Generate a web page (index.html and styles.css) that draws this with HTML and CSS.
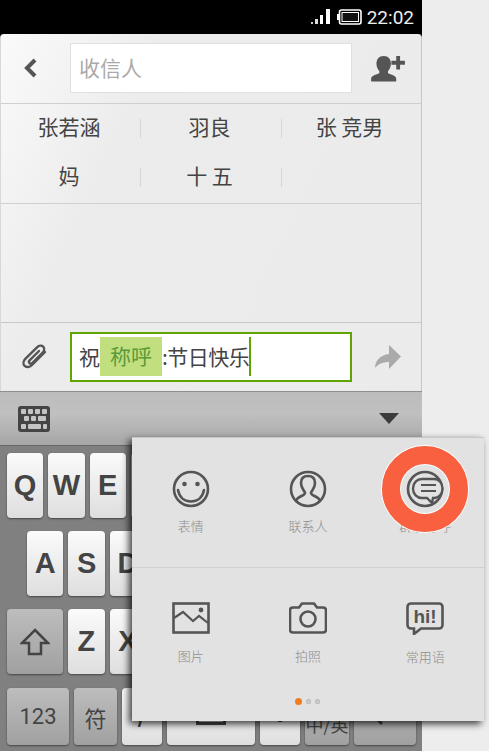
FILE: index.html
```html
<!DOCTYPE html>
<html>
<head>
    <meta charset="UTF-8">
    <title>新建短信</title>
    <link rel="stylesheet" href="styles.css">
</head>
<body>
<div class="phone">
    <!-- barra de status -->
    <div class="status-bar">
        <svg class="signal" width="20" height="16" viewBox="0 0 20 16">
            <rect x="0" y="13" width="2" height="2" fill="#ccc"/>
            <rect x="4" y="10" width="3" height="5" fill="#ddd"/>
            <rect x="9" y="6" width="3" height="9" fill="#fff"/>
            <rect x="15" y="0" width="4" height="15" fill="#fff"/>
        </svg>
        <svg class="battery" width="25" height="16" viewBox="0 0 25 16">
            <rect x="2.5" y="1" width="21.5" height="14" rx="2" fill="none" stroke="#fff" stroke-width="1.6"/>
            <rect x="0" y="5" width="2" height="6" fill="#fff"/>
            <rect x="5" y="3.5" width="16.5" height="9" fill="#111" stroke="#fff" stroke-width="1"/>
        </svg>
        <span class="clock">22:02</span>
    </div>

    <div class="screen">
        <!-- destinatario -->
        <div class="bar to-bar">
            <div class="side-icon back">
                <svg width="14" height="20" viewBox="0 0 14 20"><polyline points="11,2 3,10 11,18" fill="none" stroke="#555" stroke-width="4"/></svg>
            </div>
            <div class="field to-field">收信人</div>
            <div class="side-icon right">
                <svg width="35" height="27" viewBox="0 0 36 28">
                    <path d="M13 1c5 0 7.500 3.500 7.500 8 0 3.500-1.500 6-3 7.500v2.500c3 1.500 8.500 2.500 8.500 5.500v3H0v-3c0-3 5.500-4 8.500-5.500v-2.500C7 15 5.500 12.500 5.500 9c0-4.500 2.500-8 7.500-8z" fill="#555"/>
                    <path d="M26 1h4v5h5v4h-5v5h-4v-5h-5V6h5z" fill="#555"/>
                </svg>
            </div>
        </div>

        <!-- contatos recentes -->
        <div class="recent">
            <div class="recent-cell"><span>张若涵</span></div>
            <div class="recent-cell"><span>羽良</span></div>
            <div class="recent-cell"><span>张 竞男</span></div>
            <div class="recent-cell"><span>妈</span></div>
            <div class="recent-cell"><span>十 五</span></div>
            <div class="recent-cell"><span></span></div>
        </div>

        <div class="empty"></div>

        <!-- mensagem -->
        <div class="bar compose-bar">
            <div class="side-icon">
                <svg width="28" height="26" viewBox="0 0 28 26">
                    <path d="M23 8 10 21c-2.500 2.500-6 2.500-7.500.8s-1.300-4.800.8-7L15 3.300c2-2 4.800-2 6.200-.6s1.400 4-.5 5.900L10.500 18.800c-1 1-2.300 1-3 .3s-.7-2 .3-3L17 7" fill="none" stroke="#555" stroke-width="2.400" stroke-linecap="round"/>
                </svg>
            </div>
            <div class="field compose-field">
                <span>祝</span><span class="token">称呼</span><span class="msg">:节日快乐</span><span class="caret"></span>
            </div>
            <div class="side-icon right">
                <svg width="28" height="26" viewBox="0 0 28 26"><path d="M15 1l12 11.500L15 25v-7C9 18 4 20 1 24c0-7 5-13 14-14z" fill="#aaa"/></svg>
            </div>
        </div>
    </div>

    <!-- barra do teclado -->
    <div class="kb-toolbar">
        <svg width="32" height="26" viewBox="0 0 32 26">
            <rect width="32" height="26" rx="3" fill="#444"/>
            <g fill="#c4c4c4">
                <rect x="3" y="3" width="5" height="5" rx="1"/><rect x="10" y="3" width="5" height="5" rx="1"/><rect x="17" y="3" width="5" height="5" rx="1"/><rect x="24" y="3" width="5" height="5" rx="1"/>
                <rect x="6" y="10" width="5" height="5" rx="1"/><rect x="13" y="10" width="5" height="5" rx="1"/><rect x="20" y="10" width="8" height="5" rx="1"/>
                <rect x="3" y="18" width="5" height="5" rx="1"/><rect x="10" y="18" width="13" height="5" rx="1"/><rect x="25" y="18" width="4" height="5" rx="1"/>
            </g>
        </svg>
        <div class="triangle"></div>
    </div>

    <!-- teclado: as teclas cobertas pelo painel ficam sem letra -->
    <div class="keyboard">
        <div class="key-row">
            <div class="key">Q</div><div class="key">W</div><div class="key">E</div><div class="key"></div><div class="key"></div><div class="key"></div><div class="key"></div><div class="key"></div><div class="key"></div><div class="key"></div>
        </div>
        <div class="key-row row-inset">
            <div class="key">A</div><div class="key">S</div><div class="key">D</div><div class="key"></div><div class="key"></div><div class="key"></div><div class="key"></div><div class="key"></div><div class="key"></div>
        </div>
        <div class="key-row">
            <div class="key key-dark key-shift">
                <svg width="30" height="28" viewBox="0 0 30 28"><path d="M15 2 28 15h-7v11H9V15H2z" fill="none" stroke="#444" stroke-width="2.500"/></svg>
            </div>
            <div class="key">Z</div><div class="key">X</div><div class="key"></div><div class="key"></div><div class="key"></div><div class="key"></div><div class="key"></div>
            <div class="key key-dark key-shift"></div>
        </div>
        <div class="key-row row-bottom">
            <div class="key key-dark key-small w-62">123</div>
            <div class="key key-dark key-small w-43">符</div>
            <div class="key key-slash w-40">/</div>
            <div class="key w-88"><div class="space-mark"></div></div>
            <div class="key key-dot w-40">.</div>
            <div class="key key-dark key-lang w-44">中/英</div>
            <div class="key key-dark w-62">
                <svg width="30" height="26" viewBox="0 0 30 26"><path d="M26 3v10H6M12 6l-7 7 7 7" fill="none" stroke="#444" stroke-width="3"/></svg>
            </div>
        </div>
    </div>
</div>

<!-- painel de anexos -->
<div class="panel">
    <div class="panel-row first">
        <div class="panel-item">
            <svg width="38" height="38" viewBox="0 0 38 38">
                <circle cx="19" cy="19" r="17" fill="none" stroke="#555" stroke-width="2.600"/>
                <circle cx="12.500" cy="14" r="2.300" fill="#555"/><circle cx="25.500" cy="14" r="2.300" fill="#555"/>
                <path d="M6 20c1.500 8 7 11.500 13 11.500S30.500 28 32 20" fill="none" stroke="#555" stroke-width="2.600" stroke-linecap="round"/>
            </svg>
            <span>表情</span>
        </div>
        <div class="panel-item">
            <svg width="38" height="38" viewBox="0 0 38 38">
                <circle cx="19" cy="19" r="17" fill="none" stroke="#555" stroke-width="2.600"/>
                <path d="M7 31c1-5 9-5 9-8 0-2-4-4-4-10 0-5 3-7 7-7s7 2 7 7c0 6-4 8-4 10 0 3 8 3 9 8" fill="none" stroke="#555" stroke-width="2.600"/>
            </svg>
            <span>联系人</span>
        </div>
        <div class="panel-item">
            <svg width="38" height="38" viewBox="0 0 38 38">
                <circle cx="19" cy="19" r="17" fill="none" stroke="#555" stroke-width="2.600"/>
                <path d="M16 9h12c5 0 8.500 4 8.500 9.500S33 28 28 28h-1l-1 5-5-5h-5C11 28 7 24 7 18.500S11 9 16 9z" fill="#e2e2e2" stroke="#555" stroke-width="2.400"/>
                <path d="M15 15h15M15 21h15" stroke="#555" stroke-width="2.200"/>
            </svg>
            <span>群发称呼</span>
            <div class="highlight"></div>
        </div>
    </div>
    <div class="panel-row second">
        <div class="panel-item">
            <svg width="38" height="32" viewBox="0 0 38 32">
                <rect x="1.500" y="1.500" width="35" height="29" fill="none" stroke="#555" stroke-width="2.600"/>
                <path d="M2 16l9-6 10 9 6-5 9 7" fill="none" stroke="#555" stroke-width="2.200"/>
                <circle cx="29" cy="8" r="2.400" fill="#555"/>
            </svg>
            <span>图片</span>
        </div>
        <div class="panel-item">
            <svg width="38" height="32" viewBox="0 0 38 32">
                <path d="M4 6h6l3-4h12l3 4h6c2 0 3 1 3 3v19c0 2-1 3-3 3H4c-2 0-3-1-3-3V9c0-2 1-3 3-3z" fill="none" stroke="#555" stroke-width="2.600" transform="translate(0 -.5)"/>
                <circle cx="19" cy="17" r="7.500" fill="none" stroke="#555" stroke-width="2.600"/>
            </svg>
            <span>拍照</span>
        </div>
        <div class="panel-item">
            <svg width="38" height="33" viewBox="0 0 38 33">
                <path d="M5 1.500h28c2 0 3.500 1.500 3.500 3.500v18c0 2-1.500 3.500-3.500 3.500H15L8 32v-5.500H5c-2 0-3.500-1.500-3.500-3.500V5c0-2 1.500-3.500 3.500-3.500z" fill="none" stroke="#555" stroke-width="2.600"/>
                <text x="19" y="21" text-anchor="middle" class="hi-text">hi!</text>
            </svg>
            <span>常用语</span>
        </div>
    </div>
    <div class="dots">
        <i class="dot active"></i><i class="dot"></i><i class="dot"></i>
    </div>
</div>
</body>
</html>
```

FILE: styles.css
```css
/* Estilos gerais */
body {
    margin: 0;
    height: 751px;
    overflow: hidden;
    background: #ededed;
    font-family: "Noto Sans CJK SC", "Liberation Sans", sans-serif;
    color: #444;
}

.phone {
    width: 422px;
    height: 751px;
    display: flex;
    flex-direction: column;
    background: #000;
}

/* Barra de status */
.status-bar {
    height: 34px;
    flex: none;
    display: flex;
    align-items: center;
    justify-content: flex-end;
    padding-right: 8px;
    box-sizing: border-box;
    color: #eee;
}

.signal {
    margin-right: 6px;
}

.battery {
    margin-right: 5px;
}

.clock {
    font-family: Roboto, sans-serif;
    font-size: 19px;
}

/* Tela */
.screen {
    height: 357px;
    flex: none;
    display: flex;
    flex-direction: column;
    box-sizing: border-box;
    border-right: 1px solid #c6c6c6;
    border-left: 1px solid #d8d8d8;
    border-radius: 4px 4px 0 0;
    background: linear-gradient(115deg, #fafafa 0, #ececec 150px, #ebebeb 100%);
}

.bar {
    display: flex;
    align-items: center;
    flex: none;
    box-sizing: border-box;
}

.to-bar {
    height: 70px;
    padding-bottom: 1px;
    border-bottom: 1px solid #cfcfcf;
}

.compose-bar {
    height: 69px;
    padding-bottom: 1px;
    border-top: 1px solid #c8c8c8;
}

.side-icon {
    width: 69px;
    flex: none;
    display: flex;
    justify-content: center;
    align-items: center;
    box-sizing: border-box;
}

.side-icon.back {
    padding-right: 10px;
}

.side-icon.right {
    padding-left: 3px;
}

.field {
    width: 282px;
    height: 50px;
    flex: none;
    box-sizing: border-box;
    display: flex;
    align-items: center;
    background: #fff;
    font-size: 21px;
}

.to-field {
    border: 1px solid #e0e0e0;
    color: #aaa;
    padding-left: 8px;
    padding-bottom: 3px;
}

.compose-field {
    border: 2px solid #5fa400;
    color: #444;
    padding-left: 7px;
}

.compose-field span {
    line-height: 26px;
    margin-bottom: 1px;
}

.msg {
    letter-spacing: -0.5px;
}

.compose-field .token {
    background: #c1df7f;
    color: #5a9a3a;
    height: 39px;
    width: 62px;
    line-height: 37px;
    text-align: center;
    margin: 0;
}

.compose-field .caret {
    width: 2px;
    height: 39px;
    margin: 0;
    background: #5fa400;
}

/* Contatos recentes */
.recent {
    height: 99px;
    flex: none;
    display: grid;
    grid-template-columns: 140px 141px 1fr;
    grid-template-rows: 49px 49px;
    border-bottom: 1px solid #d0d0d0;
}

.recent-cell {
    display: flex;
    align-items: center;
    justify-content: center;
    font-size: 21px;
    color: #444;
    box-sizing: border-box;
    padding: 0 4px 5px 0;
}

.recent-cell:nth-child(3n+1),
.recent-cell:nth-child(3n+2) {
    background: linear-gradient(#d6d6d6, #d6d6d6) right center / 1px 19px no-repeat;
}

.empty {
    flex: 1;
}

/* Barra do teclado */
.kb-toolbar {
    height: 54px;
    flex: none;
    display: flex;
    align-items: center;
    justify-content: space-between;
    padding: 0 23px 0 18px;
    box-sizing: border-box;
    border-top: 1px solid #8e8e8e;
    background: linear-gradient(#bcbcbc, #c0c0c0 40%, #a6a6a6);
}

.triangle {
    width: 0;
    height: 0;
    border-left: 10px solid transparent;
    border-right: 10px solid transparent;
    border-top: 11px solid #3c3c3c;
}

/* Teclado */
.keyboard {
    flex: 1;
    background: #808080;
    border-top: 1px solid #666;
    padding: 7px 7px 0;
    display: flex;
    flex-direction: column;
    gap: 13px;
}

.key-row {
    display: flex;
    gap: 5px;
    height: 65px;
    flex: none;
}

.row-inset {
    padding: 0 20px;
}

.row-bottom {
    height: 57px;
    margin-top: 1px;
}

.key {
    flex: 1;
    display: flex;
    align-items: center;
    justify-content: center;
    border-radius: 4px;
    background: linear-gradient(#fbfbfb, #dedede);
    box-shadow: 0 1px 2px #444;
    font-family: "Liberation Sans", sans-serif;
    font-weight: bold;
    font-size: 29px;
    color: #444;
}

.key-dark {
    background: linear-gradient(#bdbdbd, #a0a0a0);
}

.key-shift {
    flex: none;
    width: 56px;
}

.key-small {
    font-family: Roboto, "Noto Sans CJK SC", sans-serif;
    font-weight: normal;
    font-size: 22px;
}

.key-lang {
    font-family: "Noto Sans CJK SC", sans-serif;
    font-weight: normal;
    font-size: 18px;
    white-space: nowrap;
    padding-top: 14px;
    box-sizing: border-box;
}

.key-slash {
    font-weight: normal;
    font-size: 30px;
}

.key-dot {
    align-items: flex-end;
    padding-bottom: 16px;
    box-sizing: border-box;
}

.w-40 { flex: none; width: 40px; }
.w-43 { flex: none; width: 43px; }
.w-44 { flex: none; width: 44px; }
.w-62 { flex: none; width: 62px; }
.w-88 { flex: none; width: 88px; }

.space-mark {
    width: 24px;
    height: 14px;
    border: 3px solid #444;
    border-top: none;
}

/* Painel sobre o teclado */
.panel {
    position: absolute;
    left: 132px;
    top: 437px;
    width: 352px;
    height: 284px;
    background: #e2e2e2;
    border-top: 1px solid #c8c8c8;
    box-sizing: border-box;
    box-shadow: -3px 3px 7px rgba(0, 0, 0, 0.75);
}

.panel-row {
    display: grid;
    grid-template-columns: repeat(3, 1fr);
    box-sizing: border-box;
}

.first {
    height: 130px;
    padding-top: 32px;
    border-bottom: 1px solid #d0d0d0;
}

.second {
    padding-top: 34px;
}

.panel-item {
    position: relative;
    display: flex;
    flex-direction: column;
    align-items: center;
    gap: 8px;
    font-size: 13px;
    font-weight: 300;
    color: #8e8e8e;
}

.panel-item svg {
    display: block;
}

.second .panel-item {
    gap: 12px;
}

.hi-text {
    font-family: "Liberation Sans", sans-serif;
    font-weight: bold;
    font-size: 19px;
    fill: #555;
}

/* Destaque laranja do tutorial */
.highlight {
    position: absolute;
    left: 50%;
    top: 19px;
    width: 50px;
    height: 50px;
    margin: -43px 0 0 -43px;
    border: 18px solid #f9603f;
    border-radius: 50%;
    box-shadow: 0 0 0 1px #fff, inset 0 0 0 1px #fff;
}

.dots {
    position: absolute;
    left: 163px;
    top: 260px;
    display: flex;
    align-items: center;
    gap: 4px;
}

.dot {
    width: 5px;
    height: 5px;
    border-radius: 50%;
    background: #ccc;
    box-shadow: inset 0 0 0 1px #bbb;
}

.dot.active {
    width: 7px;
    height: 7px;
    background: #ee7d1f;
    box-shadow: none;
}
```
